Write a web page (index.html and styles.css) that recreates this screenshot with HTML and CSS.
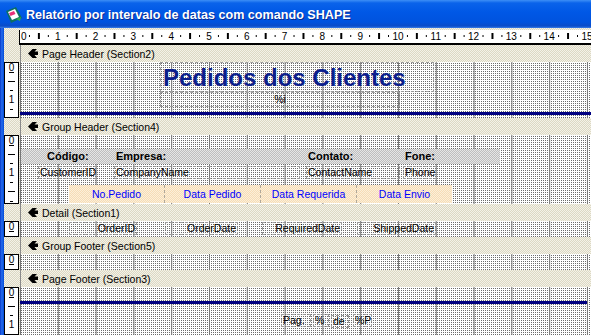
FILE: index.html
```html
<!DOCTYPE html>
<html lang="pt">

<head>
    <meta charset="UTF-8">
    <meta name="viewport" content="width=device-width, initial-scale=1.0">
    <title>Relatório por intervalo de datas com comando SHAPE</title>

    <link rel="stylesheet" href="styles.css">
</head>

<body>
    <div class="window">

        <!-- Tittellinje -->
        <div class="titlebar">
            <svg class="app-icon" width="16" height="16" viewBox="0 0 16 16">
                <path d="M0 4 L10 0 L16 11 L5 16 Z" fill="#0c6f63" />
                <path d="M2 5 L9 2 L13 10 L6 13 Z" fill="#fff" />
                <path d="M3 6 L8 4 L9.5 7 L4.5 9 Z" fill="#e8307a" />
                <path d="M10 12 L15 10 L14 14 Z" fill="#2bb04a" />
            </svg>
            <span class="title">Relatório por intervalo de datas com comando SHAPE</span>
        </div>

        <div class="client">

            <!-- Linjal -->
            <div class="ruler-row">
                <div class="corner"></div>
                <div class="hruler">
                    <div class="nums">
                        <span class="zero">0</span><span>1</span><span>2</span><span>3</span><span>4</span><span>5</span><span>6</span><span>7</span><span>8</span><span>9</span><span>10</span><span>11</span><span>12</span><span>13</span><span>14</span><span>15</span>
                    </div>
                </div>
            </div>

            <!-- Page Header -->
            <div class="bar">
                <div class="bar-side"></div>
                <div class="bar-label">
                    <svg class="sel" width="10" height="9" viewBox="0 0 10 9"><path d="M0 4.5 L4.5 0 L9 0 L6.5 2.5 L10 2.5 L10 6 L6.5 6 L9 9 L4.5 9 Z" fill="#000" /></svg>
                    Page Header (Section2)
                </div>
            </div>
            <div class="section ph">
                <div class="vruler">
                    <span class="vnum n0">0</span><i class="tick u t1"></i><i class="tick l t2"></i><i class="tick s t3"></i><span class="vnum n1">1</span><i class="tick s t5"></i>
                </div>
                <div class="canvas">
                    <div class="ctl report-title">Pedidos dos Clientes</div>
                    <div class="ctl page-expr">%i</div>
                    <div class="rule ph-rule"></div>
                </div>
            </div>

            <!-- Group Header -->
            <div class="bar">
                <div class="bar-side"></div>
                <div class="bar-label">
                    <svg class="sel" width="10" height="9" viewBox="0 0 10 9"><path d="M0 4.5 L4.5 0 L9 0 L6.5 2.5 L10 2.5 L10 6 L6.5 6 L9 9 L4.5 9 Z" fill="#000" /></svg>
                    Group Header (Section4)
                </div>
            </div>
            <div class="section gh">
                <div class="vruler">
                    <span class="vnum n0">0</span><i class="tick u t1"></i><i class="tick l t2"></i><i class="tick s t3"></i><span class="vnum n1">1</span><i class="tick s t5"></i><i class="tick l t6"></i><i class="tick s t7"></i>
                </div>
                <div class="canvas">
                    <div class="band"></div>
                    <div class="lbl lbl-codigo">Código:</div>
                    <div class="lbl lbl-empresa">Empresa:</div>
                    <div class="lbl lbl-contato">Contato:</div>
                    <div class="lbl lbl-fone">Fone:</div>

                    <div class="ctl field f-customer">CustomerID</div>
                    <div class="ctl field f-company">CompanyName</div>
                    <div class="ctl field f-contact">ContactName</div>
                    <div class="ctl field f-phone">Phone</div>

                    <div class="heads">
                        <div>No.Pedido</div>
                        <div>Data Pedido</div>
                        <div>Data Requerida</div>
                        <div>Data Envio</div>
                    </div>
                </div>
            </div>

            <!-- Detail -->
            <div class="bar">
                <div class="bar-side"></div>
                <div class="bar-label">
                    <svg class="sel" width="10" height="9" viewBox="0 0 10 9"><path d="M0 4.5 L4.5 0 L9 0 L6.5 2.5 L10 2.5 L10 6 L6.5 6 L9 9 L4.5 9 Z" fill="#000" /></svg>
                    Detail (Section1)
                </div>
            </div>
            <div class="section detail">
                <div class="vruler">
                    <span class="vnum n0">0</span><i class="tick u t1"></i>
                </div>
                <div class="canvas">
                    <div class="ctl field num d-order">OrderID</div>
                    <div class="ctl field num d-date">OrderDate</div>
                    <div class="ctl field num d-req">RequiredDate</div>
                    <div class="ctl field num d-ship">ShippedDate</div>
                </div>
            </div>

            <!-- Group Footer -->
            <div class="bar">
                <div class="bar-side"></div>
                <div class="bar-label">
                    <svg class="sel" width="10" height="9" viewBox="0 0 10 9"><path d="M0 4.5 L4.5 0 L9 0 L6.5 2.5 L10 2.5 L10 6 L6.5 6 L9 9 L4.5 9 Z" fill="#000" /></svg>
                    Group Footer (Section5)
                </div>
            </div>
            <div class="section gf">
                <div class="vruler">
                    <span class="vnum n0">0</span><i class="tick u t1"></i>
                </div>
                <div class="canvas"></div>
            </div>

            <!-- Page Footer -->
            <div class="bar">
                <div class="bar-side"></div>
                <div class="bar-label">
                    <svg class="sel" width="10" height="9" viewBox="0 0 10 9"><path d="M0 4.5 L4.5 0 L9 0 L6.5 2.5 L10 2.5 L10 6 L6.5 6 L9 9 L4.5 9 Z" fill="#000" /></svg>
                    Page Footer (Section3)
                </div>
            </div>
            <div class="section pf">
                <div class="vruler">
                    <span class="vnum n0">0</span><i class="tick u t1"></i><i class="tick l t2"></i><i class="tick s t3"></i><span class="vnum n1">1</span><i class="tick s t5"></i>
                </div>
                <div class="canvas">
                    <div class="rule pf-rule"></div>
                    <div class="ctl field p-pag">Pag.</div>
                    <div class="ctl field p-num">%</div>
                    <div class="ctl field p-de">de</div>
                    <div class="ctl field p-tot">%P</div>
                </div>
            </div>

        </div>
    </div>
</body>

</html>
```

FILE: styles.css
```css
body {
    margin: 0;
    width: 591px;
    height: 335px;
    overflow: hidden;
    font-family: "Liberation Sans", Arial, sans-serif;
}

.window {
    width: 591px;
    height: 335px;
    display: flex;
    flex-direction: column;
    background: linear-gradient(90deg, #0837c8 0, #2a72f0 2px, #0a52dc 3px);
}

/* Tittellinje */
.titlebar {
    height: 28px;
    flex: none;
    box-sizing: border-box;
    padding: 2px 0 0 6px;
    display: flex;
    align-items: center;
    gap: 4px;
    background: linear-gradient(#3d8ff6 0, #0a63ea 3px, #0058e6 12px, #0053de 22px, #0a4cc8 26px, #3a7ee8 28px);
}

.title {
    color: #fff;
    font-weight: bold;
    font-size: 12.6px;
    text-shadow: 1px 1px 0 #0b2a8f;
    white-space: nowrap;
}

/* Arbeidsflate */
.client {
    flex: 1;
    margin-left: 4px;
    padding-top: 2px;
    display: flex;
    flex-direction: column;
    background: repeating-conic-gradient(#dcd8c3 0 25%, #f4f2e8 0 50%) 0 0 / 2px 2px;
}

.ruler-row {
    display: flex;
    height: 15px;
    flex: none;
}

.corner {
    width: 15px;
    border-right: 1px solid #000;
}

.hruler {
    flex: 1;
    height: 13px;
    border-bottom: 2px solid #000;
    overflow: hidden;
    background-color: #fff;
    background-image:
        linear-gradient(90deg, transparent 18.4px, #000 18.4px, #000 19.4px, transparent 19.4px),
        linear-gradient(90deg, transparent 9px, #000 9px, #000 10px, transparent 10px, transparent 28px, #000 28px, #000 29px, transparent 29px);
    background-size: 37.8px 6px, 37.8px 2px;
    background-position: 0 3px, 0 5px;
    background-repeat: repeat-x;
}

.nums {
    display: flex;
    margin-left: -18.9px;
    font-size: 10px;
    line-height: 13px;
}

.nums span {
    flex: 0 0 37.8px;
    text-align: center;
}

.nums .zero {
    text-align: left;
    padding-left: 19.9px;
    box-sizing: border-box;
}

/* Seksjonslinjer */
.bar {
    display: flex;
    height: 17px;
    flex: none;
}

.bar-side {
    width: 16px;
}

.bar-label {
    flex: 1;
    border-left: 1px solid #8a8a8a;
    display: flex;
    align-items: center;
    gap: 4px;
    padding-left: 7px;
    font-size: 10.5px;
    color: #000;
    white-space: nowrap;
}

.section {
    display: flex;
    flex: none;
}

.ph {
    height: 56px;
}

.gh {
    height: 69px;
}

.detail,
.gf {
    height: 16px;
}

.pf {
    flex: 1;
}

/* Loddrett linjal */
.vruler {
    width: 15px;
    box-sizing: border-box;
    border: 1px solid #000;
    margin-right: 1px;
    background: #fff;
    position: relative;
    overflow: hidden;
}

.vnum {
    position: absolute;
    left: 0;
    width: 13px;
    text-align: center;
    font-size: 10px;
    line-height: 10px;
}

.n0 {
    top: 0;
}

.n1 {
    top: 32px;
}

.tick {
    position: absolute;
    height: 1px;
    background: #000;
}

.tick.u {
    left: 4px;
    width: 5px;
}

.tick.l {
    left: 3px;
    width: 7px;
}

.tick.s {
    left: 5px;
    width: 3px;
}

.t1 { top: 9px; }
.t2 { top: 18px; }
.t3 { top: 27px; }
.t5 { top: 46px; }
.t6 { top: 55px; }
.t7 { top: 65px; }

/* Rutenett */
.canvas {
    flex: 1;
    position: relative;
    background-color: #6c6c6c;
    background-image:
        linear-gradient(90deg, #777 1px, transparent 1px),
        linear-gradient(90deg, #fff 1px, transparent 1px),
        linear-gradient(#fff 1px, transparent 1px);
    background-size: 37.8px 100%, 2px 2px, 2px 2px;
}

/* Kontroller */
.ctl {
    position: absolute;
    box-sizing: border-box;
    border: 1px dashed #9c9c9c;
    white-space: nowrap;
    font-size: 10.5px;
    color: #000;
}

.report-title {
    left: 140px;
    top: 0;
    width: 274px;
    height: 30px;
    padding: 2px 0 0 2px;
    font-size: 24px;
    font-weight: bold;
    line-height: 26px;
    color: #0c1e8c;
}

.page-expr {
    left: 140px;
    top: 30px;
    width: 240px;
    height: 15px;
    line-height: 13px;
    text-align: center;
}

.rule {
    position: absolute;
    left: 0;
    height: 3px;
    background: #000080;
}

.ph-rule {
    top: 50px;
    right: 0;
}

.pf-rule {
    top: 14px;
    width: 567px;
}

.band {
    position: absolute;
    left: 1px;
    top: 14px;
    width: 479px;
    height: 15px;
    background: repeating-conic-gradient(#bebebe 0 25%, #e6e6e6 0 50%) 0 0 / 2px 2px;
}

.lbl {
    position: absolute;
    top: 14px;
    height: 15px;
    line-height: 15px;
    font-size: 11px;
    font-weight: bold;
    color: #000;
}

.lbl-codigo { left: 27px; }
.lbl-empresa { left: 96px; }
.lbl-contato { left: 288px; }
.lbl-fone { left: 385px; }

.field {
    height: 13px;
    line-height: 11px;
    padding-left: 1px;
}

.field.num {
    text-align: right;
    padding: 0 1px 0 0;
}

.f-customer { left: 18px; top: 31px; width: 59px; }
.f-company { left: 94px; top: 31px; width: 186px; }
.f-contact { left: 286px; top: 31px; width: 94px; }
.f-phone { left: 383px; top: 31px; width: 34px; }

.heads {
    position: absolute;
    left: 49px;
    top: 50px;
    width: 383px;
    height: 18px;
    display: flex;
    background: repeating-conic-gradient(#f6dcb6 0 25%, #fcf0da 0 50%) 0 0 / 2px 2px;
}

.heads div {
    flex: 1;
    border-right: 1px dashed #b0a89a;
    text-align: center;
    line-height: 18px;
    font-size: 10.5px;
    color: #0000ff;
    white-space: nowrap;
}

.heads div:last-child {
    border-right: none;
}

.d-order { left: 49px; top: 1px; width: 68px; }
.d-date { left: 145px; top: 1px; width: 73px; }
.d-req { left: 242px; top: 1px; width: 80px; }
.d-ship { left: 337px; top: 1px; width: 79px; }

.p-pag { left: 261px; top: 27px; width: 30px; }
.p-num { left: 293px; top: 27px; width: 16px; }
.p-de { left: 311px; top: 28px; width: 18px; }
.p-tot { left: 333px; top: 27px; width: 19px; }
```
